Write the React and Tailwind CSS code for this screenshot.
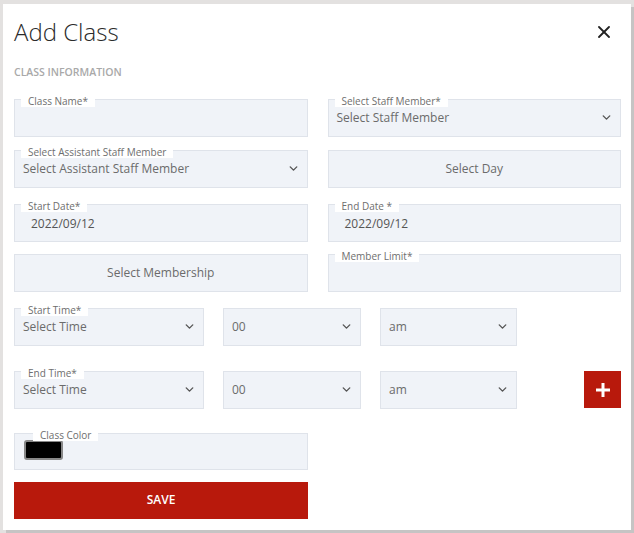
import React from "react";

const font = { fontFamily: '"Open Sans", "Noto Sans", sans-serif' };

function Chevron() {
  return (
    <svg width="13" height="13" viewBox="0 0 24 24" fill="none" stroke="#555" strokeWidth="2.6" strokeLinecap="round" strokeLinejoin="round">
      <polyline points="6 9 12 15 18 9" />
    </svg>
  );
}

function Field({ label, labelLeft = "left-[6px]", className = "", children }) {
  return (
    <div className={`relative h-[38px] shrink-0 bg-[#f0f3f8] border border-[#dfe3ea] ${className}`}>
      {label && (
        <span className={`absolute ${labelLeft} -top-[4px] bg-white px-[7px] text-[10px] leading-[11px] text-[#6e6e6e]`}>
          {label}
        </span>
      )}
      {children}
    </div>
  );
}

function SelectBox({ label, value, className = "" }) {
  return (
    <Field label={label} className={className}>
      <div className="flex h-full items-center justify-between pl-[8px] pr-[7px] text-[12px] text-[#6b6b6b]">
        <span>{value}</span>
        <Chevron />
      </div>
    </Field>
  );
}

export default function App() {
  return (
    <div className="min-h-[533px] w-[634px] bg-[#e3e1e0] pl-[3px] pt-[4px]" style={font}>
      <div className="relative h-[526px] w-[628px] bg-white px-[11px] shadow-[3px_3px_0_#c6c4c4]">
        {/* HEADER */}
        <div className="flex h-[48px] items-center justify-between pt-[8px]">
          <h1 className="text-[24px] font-light text-[#2b2b2b]">Add Class</h1>
          <svg className="mr-[10px]" width="12" height="12" viewBox="0 0 12 12" stroke="#222" strokeWidth="1.8" strokeLinecap="round">
            <line x1="1" y1="1" x2="11" y2="11" />
            <line x1="11" y1="1" x2="1" y2="11" />
          </svg>
        </div>
        <p className="mt-[13px] text-[10.5px] font-semibold text-[#a9a9a9]">CLASS INFORMATION</p>

        <div className="w-[608px] pr-[1px]">
          <div className="mt-[18px] grid grid-cols-2 gap-x-[20px]">
            <Field label="Class Name*" />
            <SelectBox label="Select Staff Member*" value="Select Staff Member" />
          </div>

          <div className="mt-[13px] grid grid-cols-2 gap-x-[20px]">
            <SelectBox label="Select Assistant Staff Member" value="Select Assistant Staff Member" />
            <Field>
              <div className="flex h-full items-center justify-center text-[12px] text-[#6b6b6b]">Select Day</div>
            </Field>
          </div>

          <div className="mt-[16px] grid grid-cols-2 gap-x-[20px]">
            <Field label="Start Date*">
              <div className="flex h-full items-center pl-[16px] pt-[3px] text-[12px] text-[#555]">2022/09/12</div>
            </Field>
            <Field label="End Date *">
              <div className="flex h-full items-center pl-[16px] pt-[3px] text-[12px] text-[#555]">2022/09/12</div>
            </Field>
          </div>

          <div className="mt-[12px] grid grid-cols-2 gap-x-[20px]">
            <Field>
              <div className="flex h-full items-center justify-center text-[12px] text-[#6b6b6b]">Select Membership</div>
            </Field>
            <Field label="Member Limit*" />
          </div>
        </div>

        {/* TIME ROWS */}
        <div className="mt-[16px] flex items-center">
          <SelectBox label="Start Time*" value="Select Time" className="w-[190px]" />
          <SelectBox value="00" className="ml-[19px] w-[138px]" />
          <SelectBox value="am" className="ml-[19px] w-[137px]" />
        </div>
        <div className="mt-[25px] flex items-center">
          <SelectBox label="End Time*" value="Select Time" className="w-[190px]" />
          <SelectBox value="00" className="ml-[19px] w-[138px]" />
          <SelectBox value="am" className="ml-[19px] w-[137px]" />
          <button className="ml-[67px] flex h-[37px] w-[37px] shrink-0 items-center justify-center bg-[#b8190c]">
            <svg width="16" height="16" viewBox="0 0 16 16" stroke="white" strokeWidth="3">
              <line x1="8" y1="1" x2="8" y2="15" />
              <line x1="1" y1="8" x2="15" y2="8" />
            </svg>
          </button>
        </div>

        {/* COLOR */}
        <Field label="Class Color" labelLeft="left-[18px]" className="mt-[24px] w-[294px] !h-[37px]">
          <div className="flex h-full items-start pl-[9px] pt-[6px]">
            <div className="h-[20px] w-[39px] rounded-[3px] border-2 border-[#888] bg-black" />
          </div>
        </Field>

        <button className="mt-[12px] flex h-[37px] w-[294px] items-center justify-center bg-[#b8190c] text-[12px] font-semibold text-white">
          SAVE
        </button>
      </div>
    </div>
  );
}
